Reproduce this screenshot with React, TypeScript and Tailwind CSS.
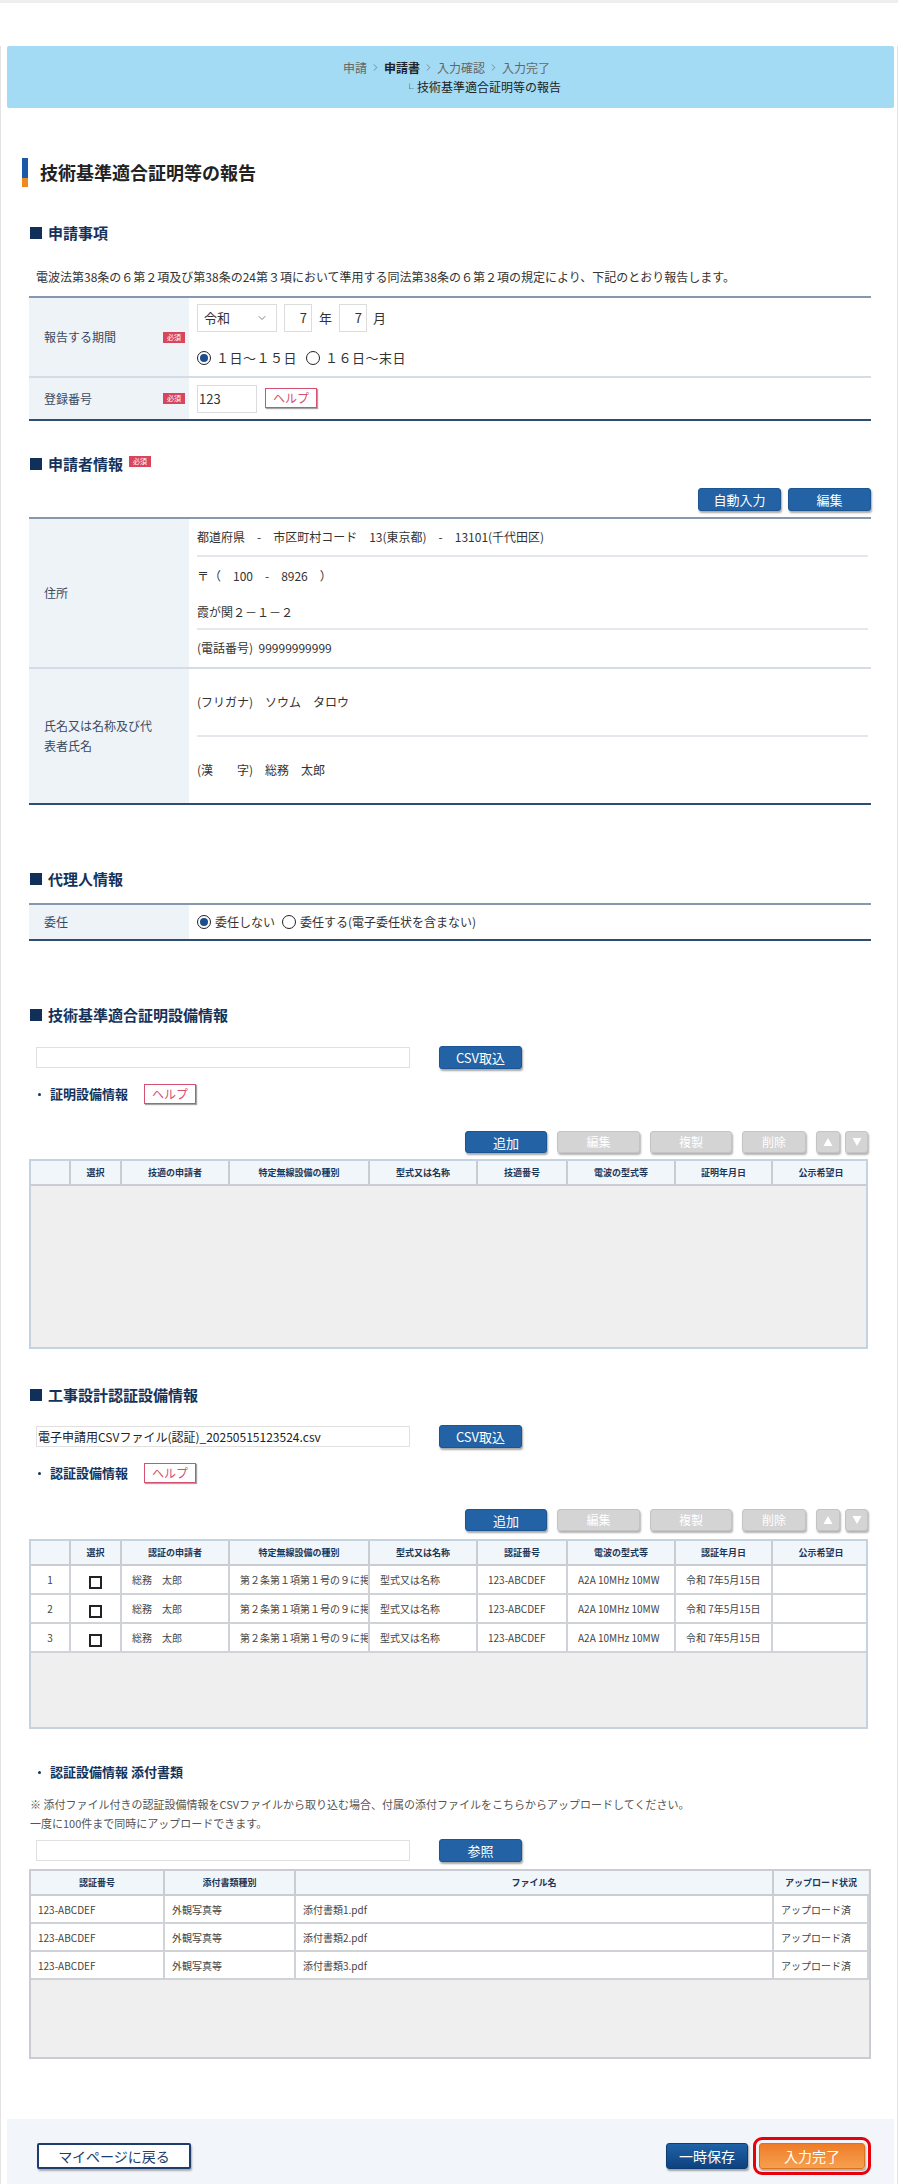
import { ChevronDown, ChevronRight } from "lucide-react";

function Badge() {
  return (
    <span className="inline-flex h-[11px] w-[22px] items-center justify-center bg-[#d8465e] text-[7px] leading-none text-white">
      必須
    </span>
  );
}

function SectionTitle({ children, badge }: { children: string; badge?: boolean }) {
  return (
    <div className="flex h-[20px] items-center pl-[1px]">
      <span className="h-[12px] w-[12px] bg-[#10305a]" />
      <span className="ml-[6px] text-[15px] font-bold leading-[20px] text-[#14325a]">{children}</span>
      {badge && (
        <span className="-mt-[6px] ml-[6px] flex">
          <Badge />
        </span>
      )}
    </div>
  );
}

function HelpButton() {
  return (
    <button className="h-[20px] w-[52px] border border-[#d6506f] bg-white text-[12px] leading-none text-[#d6506f] shadow-[1px_1px_1px_rgba(0,0,0,0.35)]">
      ヘルプ
    </button>
  );
}

function SubTitle({ children, help = true }: { children: string; help?: boolean }) {
  return (
    <div className="flex h-[20px] items-center">
      <span className="ml-[9px] h-[3px] w-[3px] rounded-full bg-[#14325a]" />
      <span className="ml-[9px] text-[13px] font-bold leading-[20px] text-[#14325a]">{children}</span>
      {help && (
        <span className="ml-[16px] flex">
          <HelpButton />
        </span>
      )}
    </div>
  );
}

function BlueButton({ children, className = "" }: { children: string; className?: string }) {
  return (
    <button
      className={`rounded-[3px] border border-[#1b5593] bg-[#2262a5] text-[13px] leading-none text-white shadow-[1px_2px_2px_rgba(0,0,0,0.35)] ${className}`}
    >
      {children}
    </button>
  );
}

function FileRow({ value = "", label = "CSV取込" }: { value?: string; label?: string }) {
  return (
    <div className="flex h-[23px] items-center">
      <div className="ml-[7px] flex h-[21px] w-[374px] items-center border border-[#e0e0e0] bg-white px-[1px] text-[12px] text-[#222]">
        {value}
      </div>
      <BlueButton className="ml-[29px] h-[23px] w-[83px]">{label}</BlueButton>
    </div>
  );
}

function Triangle({ up }: { up?: boolean }) {
  return (
    <svg width="10" height="10" viewBox="0 0 10 10">
      <polygon points={up ? "5,1 9.5,9 0.5,9" : "0.5,1 9.5,1 5,9"} fill="#fff" />
    </svg>
  );
}

function ActionButtons() {
  const gray =
    "h-[22px] rounded-[3px] border border-[#c4c4c4] bg-[#d4d4d4] text-[12px] leading-none text-white shadow-[1px_2px_2px_rgba(0,0,0,0.3)]";
  return (
    <div className="mr-[3px] flex h-[22px] items-center justify-end">
      <BlueButton className="h-[22px] w-[82px] text-[12px]">追加</BlueButton>
      <button className={`${gray} ml-[10px] w-[83px]`}>編集</button>
      <button className={`${gray} ml-[10px] w-[82px]`}>複製</button>
      <button className={`${gray} ml-[10px] w-[64px]`}>削除</button>
      <button className={`${gray} ml-[10px] flex w-[24px] items-center justify-center`}>
        <Triangle up />
      </button>
      <button className={`${gray} ml-[5px] flex w-[23px] items-center justify-center`}>
        <Triangle />
      </button>
    </div>
  );
}

function Radio({ checked }: { checked?: boolean }) {
  return (
    <span className="flex h-[14px] w-[14px] items-center justify-center rounded-full border-[1.5px] border-[#222] bg-white">
      {checked && <span className="h-[8px] w-[8px] rounded-full bg-[#1c4d8c]" />}
    </span>
  );
}

function Checkbox() {
  return <span className="inline-block h-[13px] w-[13px] border-2 border-[#222] bg-white align-middle" />;
}

type Row = string[];

function EquipmentTable({ headers, rows }: { headers: string[]; rows: Row[] }) {
  const widths = ["w-[39px]", "w-[51px]", "w-[108px]", "w-[140px]", "w-[108px]", "w-[90px]", "w-[108px]", "w-[97px]", "w-[97px]"];
  return (
    <div className="mr-[3px] h-[190px] overflow-hidden border-2 border-[#c5d3e1] bg-[#efefef]">
      <table className="w-full table-fixed border-collapse">
        <colgroup>
          {widths.map((w, i) => (
            <col key={i} className={w} />
          ))}
        </colgroup>
        <thead>
          <tr>
            {headers.map((h, i) => (
              <th
                key={i}
                className="h-[24px] border-b-2 border-r-2 border-[#c9cdd3] bg-[#f1f6fb] p-0 text-center text-[9px] font-bold text-[#1c3658] last:border-r-0"
              >
                {h}
              </th>
            ))}
          </tr>
        </thead>
        <tbody>
          {rows.map((r, ri) => (
            <tr key={ri} className="bg-white">
              <td className="h-[29px] border-b-2 border-r-2 border-[#cfd2d7] text-center text-[10px] text-[#444]">{ri + 1}</td>
              <td className="border-b-2 border-r-2 border-[#cfd2d7] text-center">
                <Checkbox />
              </td>
              {r.map((c, ci) => (
                <td
                  key={ci}
                  className="border-b-2 border-r-2 border-[#cfd2d7] pl-[10px] text-[10px] text-[#444] last:border-r-0"
                >
                  <div className="overflow-hidden whitespace-nowrap">{c}</div>
                </td>
              ))}
            </tr>
          ))}
        </tbody>
      </table>
    </div>
  );
}

function AttachTable() {
  const rows = [1, 2, 3];
  const cell = "border-b-2 border-r-2 border-[#cfd2d7] pl-[7px] text-[10px] text-[#444] whitespace-nowrap";
  return (
    <div className="h-[190px] overflow-hidden border-2 border-[#c9ccd2] bg-[#efefef]">
      <table className="w-full table-fixed border-collapse">
        <colgroup>
          <col className="w-[133px]" />
          <col className="w-[131px]" />
          <col />
          <col className="w-[95px]" />
        </colgroup>
        <thead>
          <tr>
            {["認証番号", "添付書類種別", "ファイル名", "アップロード状況"].map((h, i) => (
              <th
                key={i}
                className="h-[24px] border-b-2 border-r-2 border-[#c9cdd3] bg-[#f1f6fb] p-0 text-center text-[9px] font-bold text-[#1c3658] last:border-r-0"
              >
                {h}
              </th>
            ))}
          </tr>
        </thead>
        <tbody>
          {rows.map((n) => (
            <tr key={n} className="bg-white">
              <td className={`${cell} h-[28px]`}>123-ABCDEF</td>
              <td className={cell}>外観写真等</td>
              <td className={cell}>添付書類{n}.pdf</td>
              <td className={`${cell} border-r-0`}>アップロード済</td>
            </tr>
          ))}
        </tbody>
      </table>
    </div>
  );
}

function LabelCell({ children, badge, narrow }: { children: string; badge?: boolean; narrow?: boolean }) {
  return (
    <div className="flex w-[160px] shrink-0 items-center bg-[#eef3f8] pl-[15px] pr-[4px]">
      <span className={`${narrow ? "w-[112px]" : "flex-1"} text-[12px] leading-[20px] text-[#3a4a60]`}>{children}</span>
      {narrow && <span className="flex-1" />}
      {badge && <Badge />}
    </div>
  );
}

export default function App() {
  const certHeaders = ["", "選択", "技適の申請者", "特定無線設備の種別", "型式又は名称", "技適番号", "電波の型式等", "証明年月日", "公示希望日"];
  const ninHeaders = ["", "選択", "認証の申請者", "特定無線設備の種別", "型式又は名称", "認証番号", "電波の型式等", "認証年月日", "公示希望日"];
  const ninRow = ["総務　太郎", "第２条第１項第１号の９に掲げる無線設備", "型式又は名称", "123-ABCDEF", "A2A 10MHz 10MW", "令和 7年5月15日", ""];

  return (
    <div className="min-h-screen bg-white font-['Noto_Sans_CJK_JP','Noto_Sans',sans-serif] text-[#333]">
      <div className="h-[3px] w-[898px] bg-[#eeeeee]" />
      <div className="w-[898px] border-x border-[#e3e3e3] bg-white">
        {/* breadcrumb */}
        <div className="ml-[6px] mr-[3px] mt-[43px] h-[62px] rounded-[2px] bg-[#a3dbf5] pt-[12px]">
          <div className="ml-[336px] whitespace-nowrap text-[12px] leading-[19px]">
            <div className="flex items-center text-[#666]">
              <span>申請</span>
              <ChevronRight size={11} strokeWidth={1.5} className="mx-[3px]" />
              <span className="font-bold text-[#222]">申請書</span>
              <ChevronRight size={11} strokeWidth={1.5} className="mx-[3px]" />
              <span>入力確認</span>
              <ChevronRight size={11} strokeWidth={1.5} className="mx-[3px]" />
              <span>入力完了</span>
            </div>
            <div className="pl-[62px] text-[#222]">
              <span className="mr-[3px] text-[9px]">└</span>技術基準適合証明等の報告
            </div>
          </div>
        </div>

        {/* page title */}
        <div className="ml-[21px] mt-[50px] flex h-[29px] items-center">
          <div className="flex h-[29px] w-[6px] flex-col">
            <span className="h-[20px] bg-[#1a5aa8]" />
            <span className="flex-1 bg-[#f08a1c]" />
          </div>
          <h1 className="ml-[12px] text-[18px] font-bold leading-[29px] text-[#222]">技術基準適合証明等の報告</h1>
        </div>

        <div className="pl-[28px] pr-[26px]">
          {/* 申請事項 */}
          <div className="mt-[36px]">
            <SectionTitle>申請事項</SectionTitle>
          </div>
          <p className="mt-[25px] pl-[7px] text-[12px] leading-[18px] text-[#333]">
            電波法第38条の６第２項及び第38条の24第３項において準用する同法第38条の６第２項の規定により、下記のとおり報告します。
          </p>
          <div className="mt-[10px] border-b-2 border-t-2 border-b-[#2f4d70] border-t-[#8797ad]">
            <div className="flex h-[78px]">
              <LabelCell badge>報告する期間</LabelCell>
              <div className="flex-1 pl-[8px] pt-[6px]">
                <div className="flex h-[28px] items-center text-[13px]">
                  <div className="flex h-[28px] w-[80px] items-center justify-between border border-[#dcdcdc] bg-white pl-[6px] pr-[8px]">
                    <span>令和</span>
                    <ChevronDown size={12} strokeWidth={1.5} className="text-[#555]" />
                  </div>
                  <div className="ml-[7px] flex h-[28px] w-[28px] items-center justify-end border border-[#dcdcdc] bg-white pr-[4px]">7</div>
                  <span className="ml-[7px]">年</span>
                  <div className="ml-[7px] flex h-[28px] w-[28px] items-center justify-end border border-[#dcdcdc] bg-white pr-[4px]">7</div>
                  <span className="ml-[6px]">月</span>
                </div>
                <div className="mt-[17px] flex h-[18px] items-center text-[13px]">
                  <Radio checked />
                  <span className="ml-[5px] tracking-[0.5px]">１日〜１５日</span>
                  <span className="ml-[9px] flex">
                    <Radio />
                  </span>
                  <span className="ml-[5px] tracking-[0.5px]">１６日〜末日</span>
                </div>
              </div>
            </div>
            <div className="flex h-[43px] border-t-2 border-[#d5dce5]">
              <LabelCell badge>登録番号</LabelCell>
              <div className="flex flex-1 items-center pl-[8px]">
                <div className="flex h-[28px] w-[60px] items-center border border-[#dcdcdc] bg-white pl-[1px] text-[13px]">123</div>
                <span className="ml-[8px] mt-[-2px] flex">
                  <HelpButton />
                </span>
              </div>
            </div>
          </div>

          {/* 申請者情報 */}
          <div className="mt-[33px]">
            <SectionTitle badge>申請者情報</SectionTitle>
          </div>
          <div className="mt-[14px] flex justify-end">
            <BlueButton className="h-[23px] w-[83px] text-[12px]">自動入力</BlueButton>
            <BlueButton className="ml-[7px] h-[23px] w-[83px] text-[12px]">編集</BlueButton>
          </div>
          <div className="mt-[6px] border-b-2 border-t-2 border-b-[#2f4d70] border-t-[#8797ad]">
            <div className="flex h-[148px]">
              <LabelCell>住所</LabelCell>
              <div className="flex-1 pl-[8px] pr-[3px] text-[12px] text-[#333]">
                <div className="flex h-[36px] items-center whitespace-pre">
                  {"都道府県　-　市区町村コード　13(東京都)　-　13101(千代田区)"}
                </div>
                <div className="h-[73px] border-t-2 border-[#e4e7eb]">
                  <div className="flex h-[37px] items-center whitespace-pre">{"〒（　100　-　8926　）"}</div>
                  <div className="flex h-[36px] items-center">霞が関２－１－２</div>
                </div>
                <div className="flex h-[37px] items-center whitespace-pre border-t-2 border-[#e4e7eb]">{"(電話番号)  99999999999"}</div>
              </div>
            </div>
            <div className="flex h-[136px] border-t-2 border-[#d5dce5]">
              <LabelCell narrow>氏名又は名称及び代表者氏名</LabelCell>
              <div className="flex-1 pl-[8px] pr-[3px] text-[12px] text-[#333]">
                <div className="flex h-[66px] items-center whitespace-pre">{"(フリガナ)　ソウム　タロウ"}</div>
                <div className="flex h-[68px] items-center whitespace-pre border-t-2 border-[#e4e7eb]">{"(漢　　字)　総務　太郎"}</div>
              </div>
            </div>
          </div>

          {/* 代理人情報 */}
          <div className="mt-[64px]">
            <SectionTitle>代理人情報</SectionTitle>
          </div>
          <div className="mt-[14px] flex h-[38px] border-b-2 border-t-2 border-b-[#2f4d70] border-t-[#8797ad]">
            <LabelCell>委任</LabelCell>
            <div className="flex flex-1 items-center pl-[8px] text-[12px]">
              <Radio checked />
              <span className="ml-[4px]">委任しない</span>
              <span className="ml-[7px] flex">
                <Radio />
              </span>
              <span className="ml-[4px]">委任する(電子委任状を含まない)</span>
            </div>
          </div>

          {/* 技術基準適合証明設備情報 */}
          <div className="mt-[64px]">
            <SectionTitle>技術基準適合証明設備情報</SectionTitle>
          </div>
          <div className="mt-[21px]">
            <FileRow />
          </div>
          <div className="mt-[15px]">
            <SubTitle>証明設備情報</SubTitle>
          </div>
          <div className="mt-[27px]">
            <ActionButtons />
          </div>
          <div className="mt-[6px]">
            <EquipmentTable headers={certHeaders} rows={[]} />
          </div>

          {/* 工事設計認証設備情報 */}
          <div className="mt-[36px]">
            <SectionTitle>工事設計認証設備情報</SectionTitle>
          </div>
          <div className="mt-[20px]">
            <FileRow value="電子申請用CSVファイル(認証)_20250515123524.csv" />
          </div>
          <div className="mt-[15px]">
            <SubTitle>認証設備情報</SubTitle>
          </div>
          <div className="mt-[26px]">
            <ActionButtons />
          </div>
          <div className="mt-[8px]">
            <EquipmentTable headers={ninHeaders} rows={[ninRow, ninRow, ninRow]} />
          </div>

          {/* 添付書類 */}
          <div className="mt-[33px]">
            <SubTitle help={false}>認証設備情報 添付書類</SubTitle>
          </div>
          <div className="mt-[13px] pl-[1px] text-[11px] leading-[19px] text-[#555]">
            <p>※ 添付ファイル付きの認証設備情報をCSVファイルから取り込む場合、付属の添付ファイルをこちらからアップロードしてください。</p>
            <p>一度に100件まで同時にアップロードできます。</p>
          </div>
          <div className="mt-[6px]">
            <FileRow label="参照" />
          </div>
          <div className="mt-[7px]">
            <AttachTable />
          </div>
        </div>

        {/* footer */}
        <div className="ml-[6px] mr-[3px] mt-[60px] flex h-[66px] items-start justify-between bg-[#f2f6fa] pl-[30px] pr-[29px] pt-[24px]">
          <button className="h-[26px] w-[154px] rounded-[2px] border-2 border-[#1d3d6c] bg-white text-[14px] leading-none text-[#1d3d6c] shadow-[1px_2px_2px_rgba(0,0,0,0.3)]">
            マイページに戻る
          </button>
          <div className="flex">
            <button className="h-[26px] w-[82px] rounded-[3px] border border-[#0c3c74] bg-gradient-to-b from-[#1f62a8] to-[#0e427f] text-[14px] leading-none text-white shadow-[1px_2px_2px_rgba(0,0,0,0.35)]">
              一時保存
            </button>
            <button className="ml-[11px] h-[26px] w-[106px] rounded-[3px] border border-[#d9731d] bg-gradient-to-b from-[#ee7c26] to-[#f6a04f] text-[14px] leading-none text-white shadow-[1px_2px_2px_rgba(0,0,0,0.3)] outline-[3px] outline-offset-[3px] outline-[#e8000b] outline-solid">
              入力完了
            </button>
          </div>
        </div>
      </div>
    </div>
  );
}
